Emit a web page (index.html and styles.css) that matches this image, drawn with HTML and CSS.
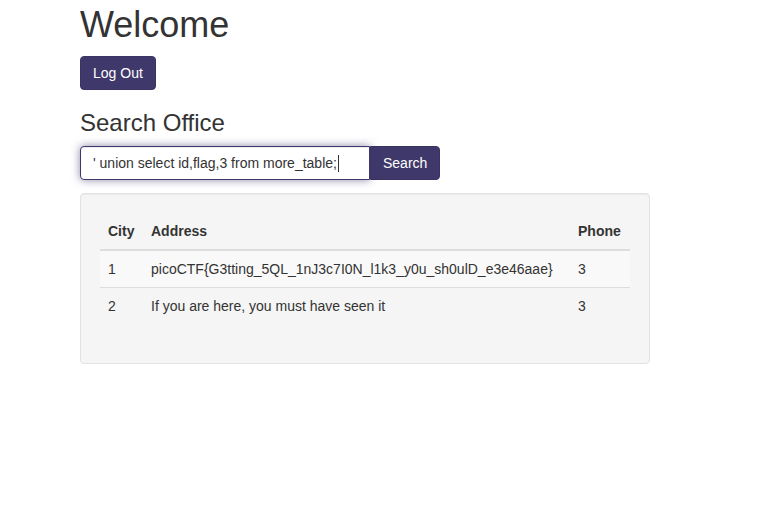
FILE: index.html
```html
<!DOCTYPE html>
<html>
<head>
<meta charset="utf-8">
<title>Welcome</title>
<link rel="stylesheet" href="styles.css">
</head>
<body>
<div class="container">
  <h1 class="title">Welcome</h1>
  <button class="btn">Log Out</button>
  <h3 class="subtitle">Search Office</h3>
  <form class="input-group">
    <div class="input-wrap">
      <input class="search-input" type="text" value="' union select id,flag,3 from more_table;">
      <span class="caret"></span>
    </div>
    <button class="btn btn-search" type="button">Search</button>
  </form>
  <div class="well">
    <table class="table">
      <thead>
        <tr><th class="col-city">City</th><th>Address</th><th class="col-phone">Phone</th></tr>
      </thead>
      <tbody>
        <tr><td>1</td><td>picoCTF{G3tting_5QL_1nJ3c7I0N_l1k3_y0u_sh0ulD_e3e46aae}</td><td>3</td></tr>
        <tr><td>2</td><td>If you are here, you must have seen it</td><td>3</td></tr>
      </tbody>
    </table>
  </div>
</div>
</body>
</html>
```
FILE: styles.css
```css
* { box-sizing: border-box; }
body {
  margin: 0;
  font-family: "Liberation Sans", Arial, sans-serif;
  font-size: 14px;
  line-height: 1.42857;
  color: #333;
  background: #fff;
}
.container {
  margin-left: 80px;
  width: 570px;
}
.title {
  font-size: 36px;
  font-weight: 500;
  line-height: 1.1;
  margin: 5px 0 11px;
}
.subtitle {
  font-size: 24px;
  font-weight: 500;
  line-height: 1.1;
  margin: 20px 0 10px;
}
.btn {
  display: inline-block;
  font-family: inherit;
  font-size: 14px;
  line-height: 20px;
  padding: 6px 12px;
  height: 34px;
  color: #fff;
  background: #3f386b;
  border: 1px solid #3a3363;
  border-radius: 4px;
  cursor: pointer;
}
.input-group {
  display: flex;
  width: 360px;
  margin: 0;
}
.input-wrap {
  position: relative;
  width: 290px;
}
.search-input {
  width: 290px;
  height: 34px;
  padding: 6px 12px;
  font-family: inherit;
  font-size: 14px;
  color: #333;
  border: 1px solid #3f386b;
  border-radius: 4px 0 0 4px;
  outline: none;
  box-shadow: inset 0 1px 1px rgba(0,0,0,.075), 0 0 8px rgba(63,56,107,.6);
}
.caret {
  position: absolute;
  left: 258px;
  top: 9px;
  width: 1px;
  height: 17px;
  background: #333;
}
.btn-search {
  width: 70px;
  border-radius: 0 4px 4px 0;
}
.well {
  margin-top: 13px;
  padding: 19px;
  background: #f5f5f5;
  border: 1px solid #e3e3e3;
  border-radius: 4px;
  box-shadow: inset 0 1px 1px rgba(0,0,0,.05);
}
.table {
  width: 100%;
  border-collapse: collapse;
  border-spacing: 0;
  margin-bottom: 20px;
}
.table th {
  text-align: left;
  font-weight: bold;
  padding: 8px;
  line-height: 20px;
  border-bottom: 2px solid #ddd;
}
.table td {
  padding: 8px;
  line-height: 20px;
  border-top: 1px solid #ddd;
}
.table tbody tr:first-child td { border-top: 0; }
.table tbody tr:nth-child(odd) { background: #f9f9f9; }
.col-city { width: 43px; }
.col-phone { width: 60px; }
```
